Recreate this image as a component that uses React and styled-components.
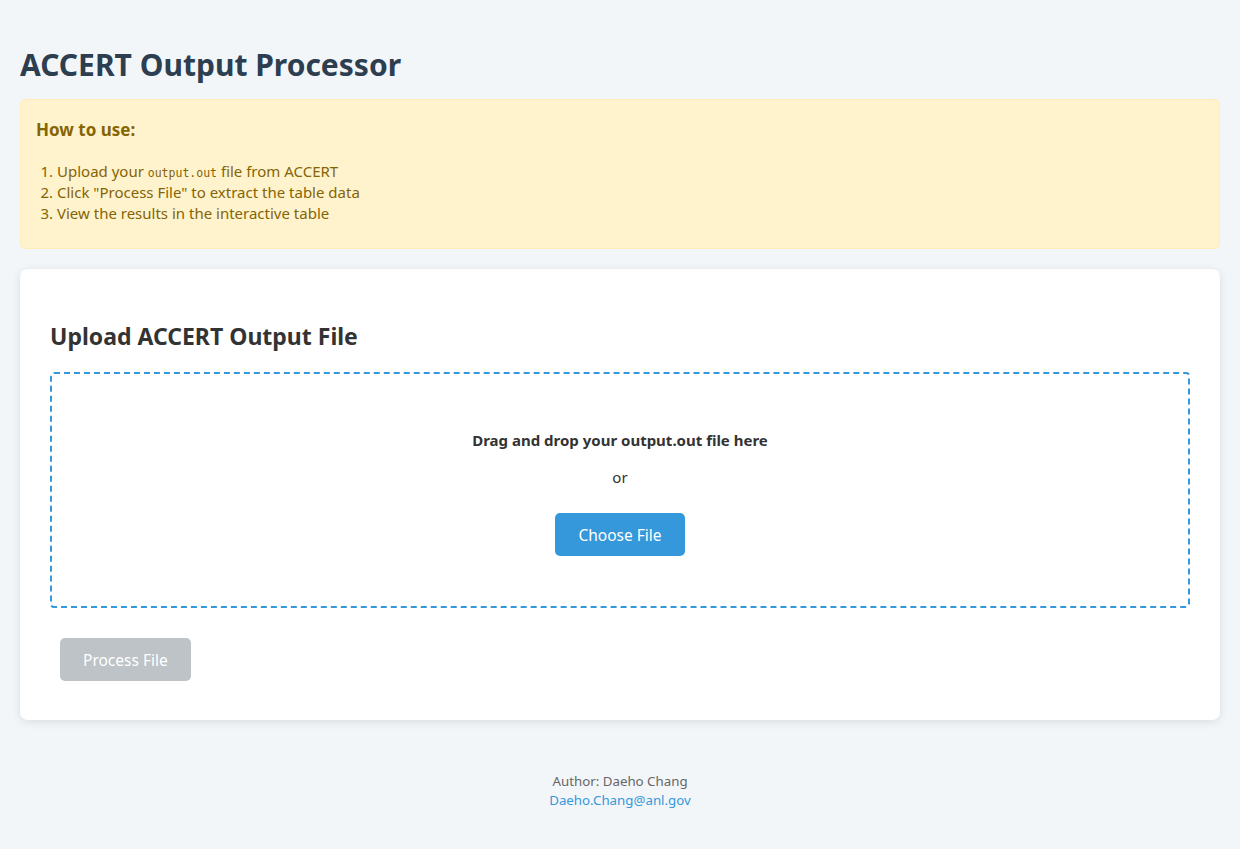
import React from 'react'
import styled, { createGlobalStyle } from 'styled-components'

const GlobalStyle = createGlobalStyle`
    html, body {
        margin: 0;
        padding: 0;
        background-color: #f3f6f9;
        font-family: "Noto Sans", "Open Sans", sans-serif;
    }
    * { box-sizing: border-box; }
`

const Page = styled.div`
    padding: 45px 20px 0;
`

const Title = styled.h1`
    margin: 0 0 14px;
    font-size: 30px;
    line-height: 40px;
    font-weight: 700;
    color: #2c3e50;
`

const Notice = styled.div`
    background-color: #fff3cd;
    border: 1px solid #ffeeba;
    border-radius: 5px;
    padding: 18px 15px 24px;
    color: #856404;
    h3{
        margin: 0 0 19px;
        font-size: 17px;
        line-height: 24px;
        font-weight: 700;
    }
    ol{
        margin: 0;
        padding-left: 21px;
        font-size: 15px;
        line-height: 21px;
    }
    code{
        font-family: "DejaVu Sans Mono", monospace;
        font-size: 11.5px;
        line-height: 0;
    }
`

const Card = styled.div`
    margin-top: 20px;
    background-color: #fff;
    border-radius: 8px;
    box-shadow: 0 2px 10px rgba(0, 0, 0, 0.1);
    padding: 50px 30px 39px;
    h2{
        margin: 0 0 19px;
        font-size: 23px;
        line-height: 34px;
        font-weight: 700;
        color: #333;
    }
`

const DropZone = styled.div`
    border: 2px dashed #3498db;
    border-radius: 4px;
    height: 236px;
    display: flex;
    flex-direction: column;
    align-items: center;
    padding-top: 56px;
    color: #333;
    strong{
        font-size: 15px;
        line-height: 20px;
    }
    span{
        margin-top: 17px;
        font-size: 15px;
        line-height: 20px;
    }
`

const Button = styled.button`
    border: none;
    border-radius: 5px;
    height: 43px;
    padding: 0 23px;
    font-family: inherit;
    font-size: 15.5px;
    color: #fff;
    background-color: ${p => p.disabled ? '#bdc3c7' : '#3498db'};
    cursor: ${p => p.disabled ? 'not-allowed' : 'pointer'};
`

const ChooseButton = styled(Button)`
    margin-top: 26px;
`

const Actions = styled.div`
    margin-top: 30px;
    padding-left: 10px;
`

const Footer = styled.footer`
    margin-top: 52px;
    text-align: center;
    font-size: 13.3px;
    line-height: 19px;
    color: #666;
    a{
        color: #3498db;
        text-decoration: none;
    }
`

function App() {
    return (
        <Page>
            <GlobalStyle />
            <Title>ACCERT Output Processor</Title>
            <Notice>
                <h3>How to use:</h3>
                <ol>
                    <li>Upload your <code>output.out</code> file from ACCERT</li>
                    <li>Click "Process File" to extract the table data</li>
                    <li>View the results in the interactive table</li>
                </ol>
            </Notice>
            <Card>
                <h2>Upload ACCERT Output File</h2>
                <DropZone>
                    <strong>Drag and drop your output.out file here</strong>
                    <span>or</span>
                    <ChooseButton>Choose File</ChooseButton>
                </DropZone>
                <Actions>
                    <Button disabled>Process File</Button>
                </Actions>
            </Card>
            <Footer>
                <div>Author: Daeho Chang</div>
                <a href="mailto:Daeho.Chang@anl.gov">Daeho.Chang@anl.gov</a>
            </Footer>
        </Page>
    )
}

export default App
